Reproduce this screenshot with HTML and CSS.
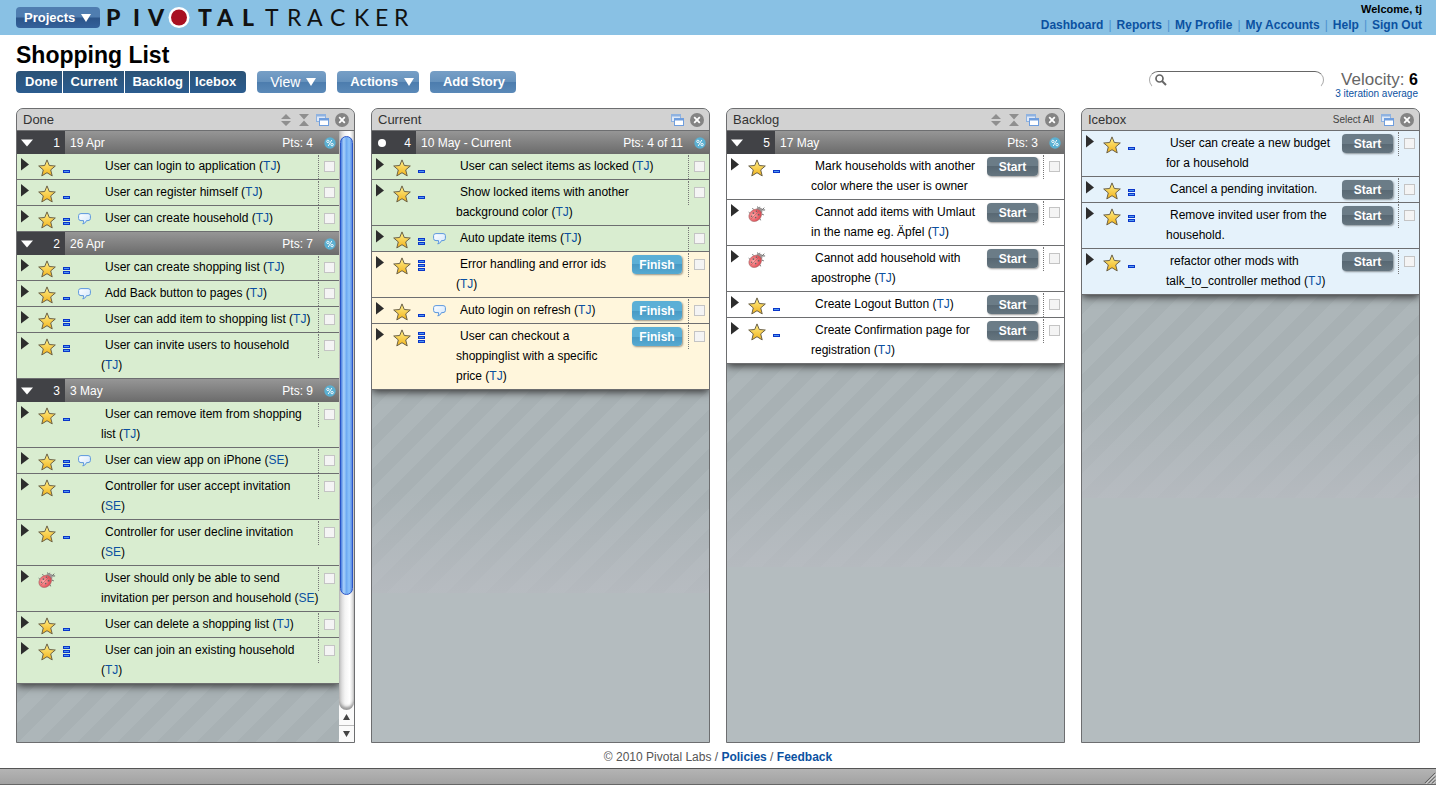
FILE: index.html
```html
<!DOCTYPE html>
<html lang="en">
<head>
<meta charset="utf-8">
<title>Shopping List - Pivotal Tracker</title>
<link rel="stylesheet" href="styles.css">
</head>
<body>
<svg class="sprite" width="0" height="0" aria-hidden="true">
  <defs>
    <linearGradient id="gold" x1="0" y1="0" x2="0" y2="1"><stop offset="0" stop-color="#fff08a"/><stop offset="1" stop-color="#f2b31c"/></linearGradient>
    <radialGradient id="red" cx=".4" cy=".4" r=".7"><stop offset="0" stop-color="#ffa9a9"/><stop offset="1" stop-color="#dc3742"/></radialGradient>
    <linearGradient id="cloud" x1="0" y1="0" x2="1" y2="1"><stop offset="0" stop-color="#fff"/><stop offset="1" stop-color="#cfe4fb"/></linearGradient>
  </defs>
  <symbol id="arrow" viewBox="0 0 9 13"><path d="M0 0L8 6.500L0 12.500Z" fill="#2d2d2d"/></symbol>
  <symbol id="star" viewBox="0 0 18 18"><path d="M9 .9L11.300 6.500L17.300 7L12.700 10.900L14.200 16.900L9 13.700L3.800 16.900L5.300 10.900L.7 7L6.700 6.500Z" fill="url(#gold)" stroke="#6b6147" stroke-width="1" stroke-linejoin="round"/></symbol>
  <symbol id="bug" viewBox="0 0 20 18"><path d="M11 4L13 1M14 6L18 2M12 2.500L10 .8M16 4.500H19M15.500 9L17.500 10M13 14L14 16M2 8L.8 7M6 4L5 2.500" stroke="#555" fill="none"/><circle cx="12.500" cy="5.500" r="3.600" fill="#9c9696"/><ellipse cx="8" cy="10.500" rx="7.500" ry="6.300" transform="rotate(-42 8 10.500)" fill="url(#red)" stroke="#a86a6a" stroke-width=".7"/><path d="M12 6L3.500 14.500" stroke="#b04a50" stroke-width=".6"/><circle cx="6" cy="8" r="1" fill="#666"/><circle cx="9.500" cy="6" r=".9" fill="#666"/><circle cx="4" cy="11.500" r=".8" fill="#666"/><circle cx="8.500" cy="13" r=".9" fill="#666"/><circle cx="11.800" cy="9.800" r="1" fill="#666"/></symbol>
  <symbol id="bar" viewBox="0 0 7 3"><rect x=".5" y=".5" width="6" height="2" fill="#4f98f2" stroke="#0b36c9"/></symbol>
  <symbol id="p1" viewBox="0 0 7 12"><use href="#bar" y="9" width="7" height="3"/></symbol>
  <symbol id="p2" viewBox="0 0 7 12"><use href="#bar" y="5" width="7" height="3"/><use href="#bar" y="9" width="7" height="3"/></symbol>
  <symbol id="p3" viewBox="0 0 7 12"><use href="#bar" y="1" width="7" height="3"/><use href="#bar" y="5" width="7" height="3"/><use href="#bar" y="9" width="7" height="3"/></symbol>
  <symbol id="note" viewBox="0 0 13 12"><path d="M3 .6H10Q12.400 .6 12.400 2.600V5.500Q12.400 7.600 10 7.600H8.500Q8 10 4.800 11Q6 9.500 5.500 7.600H3Q.6 7.600 .6 5.500V2.600Q.6 .6 3 .6Z" fill="url(#cloud)" stroke="#5b97dd"/></symbol>
  <symbol id="down" viewBox="0 0 10 8"><path d="M0 0H10L5 8Z" fill="#fff"/></symbol>
  <symbol id="open" viewBox="0 0 12 8"><path d="M0 .5H12L6 7.500Z" fill="#fff"/></symbol>
  <symbol id="dot" viewBox="0 0 12 8"><circle cx="6" cy="4" r="4" fill="#fff"/></symbol>
  <symbol id="pct" viewBox="0 0 12 12"><circle cx="6" cy="6" r="5.700" fill="#5bb0d2"/><circle cx="3.900" cy="4.400" r="1.200" fill="none" stroke="#fff" stroke-width=".9"/><circle cx="8.100" cy="7.600" r="1.200" fill="none" stroke="#fff" stroke-width=".9"/><path d="M7.800 3L4.200 9" stroke="#fff" stroke-width=".9"/></symbol>
  <symbol id="expand" viewBox="0 0 12 12"><path d="M1 5L6 0L11 5ZM1 7H11L6 12Z" fill="#8f8f8f"/></symbol>
  <symbol id="squeeze" viewBox="0 0 12 12"><path d="M1 0H11L6 5.500ZM1 12L6 6.500L11 12Z" fill="#8f8f8f"/></symbol>
  <symbol id="win" viewBox="0 0 13 12"><rect x=".5" y=".5" width="9" height="7" fill="#dfe9f7" stroke="#8fb2e0"/><path d="M0 0H10V2.500H0Z" fill="#8fb2e0"/><rect x="3.500" y="4.500" width="9" height="7" fill="#fff" stroke="#6f9ede"/><path d="M3 4H13V6.500H3Z" fill="#6f9ede"/></symbol>
  <symbol id="close" viewBox="0 0 14 14"><circle cx="7" cy="7" r="7" fill="#848484"/><path d="M4.200 4.200L9.800 9.800M9.800 4.200L4.200 9.800" stroke="#fff" stroke-width="1.800"/></symbol>
</svg>

<header class="top">
  <button class="pill projects" type="button">Projects <svg class="i-down"><use href="#down"/></svg></button>
  <svg class="logo" viewBox="0 0 302 24" role="img" aria-label="Pivotal Tracker">
    <text class="logo-bold" x="0 27 42" y="20">PIV</text>
    <circle cx="73" cy="11.500" r="10.500" fill="#fff"/><circle cx="73" cy="11.500" r="8" fill="#a81022"/>
    <text class="logo-bold" x="92 111 136" y="20">TAL</text>
    <text class="logo-thin" x="159 181 201 224 248 269 288" y="20">TRACKER</text>
  </svg>
  <div class="account">
    <div class="welcome">Welcome, tj</div>
    <nav class="links"><a href="#">Dashboard</a><a href="#">Reports</a><a href="#">My Profile</a><a href="#">My Accounts</a><a href="#">Help</a><a href="#">Sign Out</a></nav>
  </div>
</header>

<section class="project">
  <h1>Shopping List</h1>
  <div class="tools">
    <div class="tabs"><button type="button">Done</button><button type="button">Current</button><button type="button">Backlog</button><button type="button">Icebox</button></div>
    <button class="pill light view" type="button">View <svg class="i-down"><use href="#down"/></svg></button>
    <button class="pill light" type="button">Actions <svg class="i-down"><use href="#down"/></svg></button>
    <button class="pill light" type="button">Add Story</button>
    <div class="status">
      <label class="search"><svg viewBox="0 0 12 12"><circle cx="4.500" cy="4.500" r="3.500" fill="none" stroke="#666" stroke-width="1.700"/><path d="M7 7L11 11" stroke="#666" stroke-width="2"/></svg><input type="text" aria-label="Search"></label>
      <div class="velocity"><div class="speed">Velocity: <b>6</b></div><a href="#">3 iteration average</a></div>
    </div>
  </div>
</section>

<main class="panels">
  <section class="panel">
    <header class="bar"><h2>Done</h2><button type="button" aria-label="Expand all"><svg class="i-12"><use href="#expand"/></svg></button><button type="button" aria-label="Collapse all"><svg class="i-12"><use href="#squeeze"/></svg></button><button type="button" aria-label="Open in window"><svg class="i-win"><use href="#win"/></svg></button><button type="button" aria-label="Close"><svg class="i-close"><use href="#close"/></svg></button></header>
    <div class="body">
      <div class="scroll">
        <div class="list">
          <div class="iter"><span class="num"><svg class="i-open"><use href="#open"/></svg>1</span><span class="date">19 Apr</span><span>Pts: 4</span><svg class="i-12"><use href="#pct"/></svg></div>
          <article class="story done"><div class="icons"><svg class="i-arrow"><use href="#arrow"/></svg><svg class="i-type"><use href="#star"/></svg><svg class="i-pts"><use href="#p1"/></svg></div><div class="text"><span class="pick"><input type="checkbox" aria-label="Select story"></span>User can login to application (<a href="#">TJ</a>)</div></article>
          <article class="story done"><div class="icons"><svg class="i-arrow"><use href="#arrow"/></svg><svg class="i-type"><use href="#star"/></svg><svg class="i-pts"><use href="#p1"/></svg></div><div class="text"><span class="pick"><input type="checkbox" aria-label="Select story"></span>User can register himself (<a href="#">TJ</a>)</div></article>
          <article class="story done"><div class="icons"><svg class="i-arrow"><use href="#arrow"/></svg><svg class="i-type"><use href="#star"/></svg><svg class="i-pts"><use href="#p2"/></svg><svg class="i-note"><use href="#note"/></svg></div><div class="text"><span class="pick"><input type="checkbox" aria-label="Select story"></span>User can create household (<a href="#">TJ</a>)</div></article>
          <div class="iter"><span class="num"><svg class="i-open"><use href="#open"/></svg>2</span><span class="date">26 Apr</span><span>Pts: 7</span><svg class="i-12"><use href="#pct"/></svg></div>
          <article class="story done"><div class="icons"><svg class="i-arrow"><use href="#arrow"/></svg><svg class="i-type"><use href="#star"/></svg><svg class="i-pts"><use href="#p2"/></svg></div><div class="text"><span class="pick"><input type="checkbox" aria-label="Select story"></span>User can create shopping list (<a href="#">TJ</a>)</div></article>
          <article class="story done"><div class="icons"><svg class="i-arrow"><use href="#arrow"/></svg><svg class="i-type"><use href="#star"/></svg><svg class="i-pts"><use href="#p1"/></svg><svg class="i-note"><use href="#note"/></svg></div><div class="text"><span class="pick"><input type="checkbox" aria-label="Select story"></span>Add Back button to pages (<a href="#">TJ</a>)</div></article>
          <article class="story done"><div class="icons"><svg class="i-arrow"><use href="#arrow"/></svg><svg class="i-type"><use href="#star"/></svg><svg class="i-pts"><use href="#p2"/></svg></div><div class="text"><span class="pick"><input type="checkbox" aria-label="Select story"></span>User can add item to shopping list (<a href="#">TJ</a>)</div></article>
          <article class="story done"><div class="icons"><svg class="i-arrow"><use href="#arrow"/></svg><svg class="i-type"><use href="#star"/></svg><svg class="i-pts"><use href="#p2"/></svg></div><div class="text"><span class="pick"><input type="checkbox" aria-label="Select story"></span>User can invite users to household (<a href="#">TJ</a>)</div></article>
          <div class="iter"><span class="num"><svg class="i-open"><use href="#open"/></svg>3</span><span class="date">3 May</span><span>Pts: 9</span><svg class="i-12"><use href="#pct"/></svg></div>
          <article class="story done"><div class="icons"><svg class="i-arrow"><use href="#arrow"/></svg><svg class="i-type"><use href="#star"/></svg><svg class="i-pts"><use href="#p1"/></svg></div><div class="text"><span class="pick"><input type="checkbox" aria-label="Select story"></span>User can remove item from shopping list (<a href="#">TJ</a>)</div></article>
          <article class="story done"><div class="icons"><svg class="i-arrow"><use href="#arrow"/></svg><svg class="i-type"><use href="#star"/></svg><svg class="i-pts"><use href="#p2"/></svg><svg class="i-note"><use href="#note"/></svg></div><div class="text"><span class="pick"><input type="checkbox" aria-label="Select story"></span>User can view app on iPhone (<a href="#">SE</a>)</div></article>
          <article class="story done"><div class="icons"><svg class="i-arrow"><use href="#arrow"/></svg><svg class="i-type"><use href="#star"/></svg><svg class="i-pts"><use href="#p1"/></svg></div><div class="text"><span class="pick"><input type="checkbox" aria-label="Select story"></span>Controller for user accept invitation (<a href="#">SE</a>)</div></article>
          <article class="story done"><div class="icons"><svg class="i-arrow"><use href="#arrow"/></svg><svg class="i-type"><use href="#star"/></svg><svg class="i-pts"><use href="#p1"/></svg></div><div class="text"><span class="pick"><input type="checkbox" aria-label="Select story"></span>Controller for user decline invitation (<a href="#">SE</a>)</div></article>
          <article class="story done"><div class="icons"><svg class="i-arrow"><use href="#arrow"/></svg><svg class="i-type"><use href="#bug"/></svg></div><div class="text"><span class="pick"><input type="checkbox" aria-label="Select story"></span>User should only be able to send invitation per person and household (<a href="#">SE</a>)</div></article>
          <article class="story done"><div class="icons"><svg class="i-arrow"><use href="#arrow"/></svg><svg class="i-type"><use href="#star"/></svg><svg class="i-pts"><use href="#p1"/></svg></div><div class="text"><span class="pick"><input type="checkbox" aria-label="Select story"></span>User can delete a shopping list (<a href="#">TJ</a>)</div></article>
          <article class="story done"><div class="icons"><svg class="i-arrow"><use href="#arrow"/></svg><svg class="i-type"><use href="#star"/></svg><svg class="i-pts"><use href="#p3"/></svg></div><div class="text"><span class="pick"><input type="checkbox" aria-label="Select story"></span>User can join an existing household (<a href="#">TJ</a>)</div></article>
        </div>
        <div class="stripes"></div>
      </div>
      <div class="scrollbar" aria-hidden="true">
        <div class="track"><div class="thumb"></div></div>
        <svg viewBox="0 0 15 32"><path d="M4 10L7.500 4L11 10ZM4 21H11L7.500 27Z" fill="#444"/><path d="M0 15.500H15" stroke="#bbb"/></svg>
      </div>
    </div>
  </section>

  <section class="panel">
    <header class="bar"><h2>Current</h2><button type="button" aria-label="Open in window"><svg class="i-win"><use href="#win"/></svg></button><button type="button" aria-label="Close"><svg class="i-close"><use href="#close"/></svg></button></header>
    <div class="body">
      <div class="scroll">
        <div class="list">
          <div class="iter now"><span class="num"><svg class="i-open"><use href="#dot"/></svg>4</span><span class="date">10 May - Current</span><span>Pts: 4 of 11</span><svg class="i-12"><use href="#pct"/></svg></div>
          <article class="story done"><div class="icons"><svg class="i-arrow"><use href="#arrow"/></svg><svg class="i-type"><use href="#star"/></svg><svg class="i-pts"><use href="#p1"/></svg></div><div class="text"><span class="pick"><input type="checkbox" aria-label="Select story"></span>User can select items as locked (<a href="#">TJ</a>)</div></article>
          <article class="story done"><div class="icons"><svg class="i-arrow"><use href="#arrow"/></svg><svg class="i-type"><use href="#star"/></svg><svg class="i-pts"><use href="#p1"/></svg></div><div class="text"><span class="pick"><input type="checkbox" aria-label="Select story"></span>Show locked items with another background color (<a href="#">TJ</a>)</div></article>
          <article class="story done"><div class="icons"><svg class="i-arrow"><use href="#arrow"/></svg><svg class="i-type"><use href="#star"/></svg><svg class="i-pts"><use href="#p2"/></svg><svg class="i-note"><use href="#note"/></svg></div><div class="text"><span class="pick"><input type="checkbox" aria-label="Select story"></span>Auto update items (<a href="#">TJ</a>)</div></article>
          <article class="story active"><div class="icons"><svg class="i-arrow"><use href="#arrow"/></svg><svg class="i-type"><use href="#star"/></svg><svg class="i-pts"><use href="#p3"/></svg></div><div class="text"><span class="pick"><input type="checkbox" aria-label="Select story"></span><button class="act finish" type="button">Finish</button>Error handling and error ids (<a href="#">TJ</a>)</div></article>
          <article class="story active"><div class="icons"><svg class="i-arrow"><use href="#arrow"/></svg><svg class="i-type"><use href="#star"/></svg><svg class="i-pts"><use href="#p1"/></svg><svg class="i-note"><use href="#note"/></svg></div><div class="text"><span class="pick"><input type="checkbox" aria-label="Select story"></span><button class="act finish" type="button">Finish</button>Auto login on refresh (<a href="#">TJ</a>)</div></article>
          <article class="story active"><div class="icons"><svg class="i-arrow"><use href="#arrow"/></svg><svg class="i-type"><use href="#star"/></svg><svg class="i-pts"><use href="#p3"/></svg></div><div class="text"><span class="pick"><input type="checkbox" aria-label="Select story"></span><button class="act finish" type="button">Finish</button>User can checkout a shoppinglist with a specific<br>price (<a href="#">TJ</a>)</div></article>
        </div>
        <div class="stripes"></div>
      </div>
    </div>
  </section>

  <section class="panel">
    <header class="bar"><h2>Backlog</h2><button type="button" aria-label="Expand all"><svg class="i-12"><use href="#expand"/></svg></button><button type="button" aria-label="Collapse all"><svg class="i-12"><use href="#squeeze"/></svg></button><button type="button" aria-label="Open in window"><svg class="i-win"><use href="#win"/></svg></button><button type="button" aria-label="Close"><svg class="i-close"><use href="#close"/></svg></button></header>
    <div class="body">
      <div class="scroll">
        <div class="list">
          <div class="iter"><span class="num"><svg class="i-open"><use href="#open"/></svg>5</span><span class="date">17 May</span><span>Pts: 3</span><svg class="i-12"><use href="#pct"/></svg></div>
          <article class="story"><div class="icons"><svg class="i-arrow"><use href="#arrow"/></svg><svg class="i-type"><use href="#star"/></svg><svg class="i-pts"><use href="#p1"/></svg></div><div class="text"><span class="pick"><input type="checkbox" aria-label="Select story"></span><button class="act" type="button">Start</button>Mark households with another color where the user is owner</div></article>
          <article class="story"><div class="icons"><svg class="i-arrow"><use href="#arrow"/></svg><svg class="i-type"><use href="#bug"/></svg></div><div class="text"><span class="pick"><input type="checkbox" aria-label="Select story"></span><button class="act" type="button">Start</button>Cannot add items with Umlaut in the name eg. Äpfel (<a href="#">TJ</a>)</div></article>
          <article class="story"><div class="icons"><svg class="i-arrow"><use href="#arrow"/></svg><svg class="i-type"><use href="#bug"/></svg></div><div class="text"><span class="pick"><input type="checkbox" aria-label="Select story"></span><button class="act" type="button">Start</button>Cannot add household with apostrophe (<a href="#">TJ</a>)</div></article>
          <article class="story"><div class="icons"><svg class="i-arrow"><use href="#arrow"/></svg><svg class="i-type"><use href="#star"/></svg><svg class="i-pts"><use href="#p1"/></svg></div><div class="text"><span class="pick"><input type="checkbox" aria-label="Select story"></span><button class="act" type="button">Start</button>Create Logout Button (<a href="#">TJ</a>)</div></article>
          <article class="story"><div class="icons"><svg class="i-arrow"><use href="#arrow"/></svg><svg class="i-type"><use href="#star"/></svg><svg class="i-pts"><use href="#p1"/></svg></div><div class="text"><span class="pick"><input type="checkbox" aria-label="Select story"></span><button class="act" type="button">Start</button>Create Confirmation page for registration (<a href="#">TJ</a>)</div></article>
        </div>
        <div class="stripes"></div>
      </div>
    </div>
  </section>

  <section class="panel">
    <header class="bar"><h2>Icebox</h2><a class="all" href="#">Select All</a><button type="button" aria-label="Open in window"><svg class="i-win"><use href="#win"/></svg></button><button type="button" aria-label="Close"><svg class="i-close"><use href="#close"/></svg></button></header>
    <div class="body">
      <div class="scroll">
        <div class="list">
          <article class="story ice"><div class="icons"><svg class="i-arrow"><use href="#arrow"/></svg><svg class="i-type"><use href="#star"/></svg><svg class="i-pts"><use href="#p1"/></svg></div><div class="text"><span class="pick"><input type="checkbox" aria-label="Select story"></span><button class="act" type="button">Start</button>User can create a new budget for a household</div></article>
          <article class="story ice"><div class="icons"><svg class="i-arrow"><use href="#arrow"/></svg><svg class="i-type"><use href="#star"/></svg><svg class="i-pts"><use href="#p2"/></svg></div><div class="text"><span class="pick"><input type="checkbox" aria-label="Select story"></span><button class="act" type="button">Start</button>Cancel a pending invitation.</div></article>
          <article class="story ice"><div class="icons"><svg class="i-arrow"><use href="#arrow"/></svg><svg class="i-type"><use href="#star"/></svg><svg class="i-pts"><use href="#p2"/></svg></div><div class="text"><span class="pick"><input type="checkbox" aria-label="Select story"></span><button class="act" type="button">Start</button>Remove invited user from the household.</div></article>
          <article class="story ice"><div class="icons"><svg class="i-arrow"><use href="#arrow"/></svg><svg class="i-type"><use href="#star"/></svg><svg class="i-pts"><use href="#p1"/></svg></div><div class="text"><span class="pick"><input type="checkbox" aria-label="Select story"></span><button class="act" type="button">Start</button>refactor other mods with talk_to_controller method (<a href="#">TJ</a>)</div></article>
        </div>
        <div class="stripes"></div>
      </div>
    </div>
  </section>
</main>

<footer class="legal">© 2010 Pivotal Labs / <a href="#">Policies</a> / <a href="#">Feedback</a></footer>
<div class="window-edge"><svg viewBox="0 0 14 14"><path d="M2 13L13 2M6 13L13 6M10 13L13 10" stroke="#555"/><path d="M3 14L14 3M7 14L14 7M11 14L14 11" stroke="#ddd"/></svg></div>
</body>
</html>
```

FILE: styles.css
```css
* { box-sizing: border-box; }

body {
  margin: 0;
  min-height: 100vh;
  display: flex;
  flex-direction: column;
  background: #fff;
  color: #000;
  font: 12px/20px "Liberation Sans", Arial, sans-serif;
}

svg { display: block; flex: none; }
.sprite { position: absolute; }
button { font: inherit; border: 0; padding: 0; margin: 0; background: none; color: inherit; }
a { color: #0b51a1; text-decoration: none; }
h1, h2 { margin: 0; }

.i-down { width: 10px; height: 8px; }
.i-12 { width: 12px; height: 12px; }
.i-win { width: 13px; height: 12px; }
.i-close { width: 14px; height: 14px; }
.i-open { width: 12px; height: 8px; }

/* Top bar */
.top {
  display: flex;
  align-items: flex-start;
  height: 35px;
  padding: 0 14px 0 16px;
  background: #89c1e4;
}

.pill {
  display: flex;
  align-items: center;
  gap: 6px;
  height: 22px;
  padding: 0 5px 0 13px;
  border-radius: 4px;
  color: #fff;
  font-size: 13px;
  font-weight: bold;
}
.projects {
  height: 21px;
  margin: 7px 6px 0 0;
  padding: 0 9px 0 8px;
  background: linear-gradient(#4f7db0 0 45%, #2c558a 55%, #34619a);
}
.light { background: linear-gradient(#779fc6, #6692bd 48%, #4d7dae 52%, #5a89b8); }
.light:last-of-type { padding-right: 11px; }
.view { font-size: 14px; font-weight: normal; padding-right: 10px; }

.logo { width: 302px; height: 24px; margin-top: 6px; overflow: visible; }
.logo text { font-family: Lato, sans-serif; font-size: 23px; fill: #111; }
.logo .logo-bold { font-weight: 900; }
.logo .logo-thin { font-weight: 400; }

.account { margin-left: auto; text-align: right; }
.welcome { padding-top: 3px; font-size: 11px; font-weight: bold; line-height: 13px; }
.links { font-weight: bold; line-height: 18px; }
.links a + a::before { content: "|"; margin: 0 5px; color: #4c92cf; font-weight: normal; }

/* Project title and tools */
.project { padding: 5px 18px 15px 16px; }
h1 { font-size: 23px; line-height: 31px; }
.tools { display: flex; gap: 11px; height: 22px; }
.tabs { display: flex; gap: 1px; border-radius: 4px; overflow: hidden; }
.tabs button {
  padding: 0 6px 0 7px;
  background: linear-gradient(#2b5377, #2b5c8f);
  color: #fff;
  font-size: 13px;
  font-weight: bold;
}
.tabs button:first-child { padding-left: 9px; padding-right: 4px; }
.tabs button:nth-child(2) { padding: 0 7px 0 8px; }
.tabs button:last-child { padding-left: 5px; padding-right: 10px; }

.status { display: flex; gap: 11px; margin-left: auto; }
.search {
  display: flex;
  align-items: center;
  width: 175px;
  height: 18px;
  padding: 0 8px 0 5px;
  border: 1px solid #aaa;
  border-top-color: #666;
  border-bottom-color: transparent;
  border-radius: 9px;
}
.search svg { width: 12px; height: 12px; }
.search input { flex: 1; min-width: 0; border: 0; outline: 0; background: none; font-size: 12px; }
.velocity { text-align: right; font-size: 10px; line-height: 12px; }
.velocity a { display: block; }
.speed { color: #666; font-size: 17px; line-height: 17px; }
.speed b { color: #000; font-size: 16px; }

/* Panels */
.panels {
  flex: 1;
  display: grid;
  grid-template-columns: repeat(4, minmax(0, 1fr));
  gap: 16px;
  padding: 0 16px;
}
.panel {
  display: flex;
  flex-direction: column;
  border: 1px solid #6d6e70;
  border-radius: 7px 7px 0 0;
  background: #b4bcbf;
  overflow: hidden;
}
.bar {
  display: flex;
  align-items: center;
  gap: 6px;
  height: 22px;
  padding: 0 5px 0 6px;
  border-bottom: 1px solid #6d6e70;
  background: #d2d2d2;
}
.bar h2 { flex: 1; color: #333; font-size: 13px; font-weight: normal; line-height: 18px; }
.bar .all { padding-right: 1px; color: #444; font-size: 10px; }

.body { flex: 1; display: flex; }
.scroll { flex: 1; min-width: 0; display: flex; flex-direction: column; overflow: hidden; }
.list { position: relative; box-shadow: 0 2px 8px #333; }
.stripes {
  flex: 1;
  background:
    linear-gradient(transparent 50%, #bbbec4b0) 0 0 / 100% 203px no-repeat,
    repeating-linear-gradient(135deg, #a8b1b4 0 14px, #adb6b9 14px 28px) 0 0 / 100% 203px no-repeat;
}

.iter {
  display: flex;
  align-items: center;
  height: 23px;
  padding-right: 3px;
  background: linear-gradient(#969696, #6b6b6b);
  color: #fff;
  line-height: 22px;
}
.iter > svg { margin-left: 11px; }
.num {
  display: flex;
  align-items: center;
  justify-content: space-between;
  align-self: stretch;
  width: 48px;
  padding: 0 5px 0 4px;
  background: #414246;
}
.now .num { width: 44px; }
.date { flex: 1; padding-left: 5px; }

.story { display: flex; border-bottom: 1px solid #6d6e70; background: #fff; }
.done { background: #d9edd0; }
.active { background: #fff6dc; }
.ice { background: #e5f2fb; }

.icons { display: flex; width: 84px; max-height: 25px; padding: 4px 0 0 4px; }
.i-arrow { width: 9px; height: 13px; margin-right: 8px; }
.i-type { width: 18px; height: 18px; margin: 1px 7px 0 0; }
.i-pts { width: 7px; height: 12px; margin: 3px 8px 0 0; }
.i-note { width: 13px; height: 12px; margin-top: 3px; }

/* The checkbox cell hangs past its line so that later lines run below it */
.text { flex: 1; min-width: 0; padding: 2px 0 3px; text-indent: 4px; }
.pick {
  float: right;
  width: 21px;
  height: 24px;
  margin: -1px 0 -4px 5px;
  padding: 6px 5px 0;
  border-left: 1px dotted #777;
  text-indent: 0;
}
.pick input {
  appearance: none;
  display: block;
  width: 11px;
  height: 11px;
  margin: 0;
  border: 1px solid #c4c4c4;
  background: #f4f4f4;
}
.act {
  float: right;
  width: 51px;
  height: 19px;
  margin: 1px 0 0 4px;
  border-radius: 4px;
  background: linear-gradient(#6b7c87 50%, #586873 50%, #65757f);
  box-shadow: 1px 1px 2px #0006;
  color: #fff;
  font-weight: bold;
  line-height: 18px;
  text-align: center;
  text-indent: 0;
}
.finish { width: 50px; margin-right: 1px; background: linear-gradient(#5bafd6 50%, #4799c4 50%, #56aad2); }

/* Scroll bar */
.scrollbar { width: 15px; display: flex; flex-direction: column; background: #fafafa; }
.track {
  flex: 1;
  display: grid;
  grid-template-rows: 80fr 20fr;
  padding-top: 5px;
  border-radius: 0 0 8px 8px;
  background: linear-gradient(90deg, #c8c8c8, #f4f4f4 40%, #fff 70%, #ddd);
  box-shadow: inset 0 -3px 3px #999;
}
.thumb {
  margin: 0 1px;
  border: 1px solid #2b55c8;
  border-radius: 7px;
  background: linear-gradient(90deg, #4a7ee0, #a9d2fa 25%, #6faaf2 50%, #8cc4fb 75%, #5b8be4);
}
.scrollbar svg { width: 15px; height: 32px; }

/* Footer */
.legal { height: 25px; padding-top: 4px; color: #555; text-align: center; }
.legal a { font-weight: bold; }
.window-edge {
  display: flex;
  justify-content: flex-end;
  height: 17px;
  padding-top: 2px;
  border-top: 1px solid #555;
  border-bottom: 1px solid #666;
  background: linear-gradient(#b4b4b4, #a2a2a2);
}
.window-edge svg { width: 13px; height: 13px; }
```
